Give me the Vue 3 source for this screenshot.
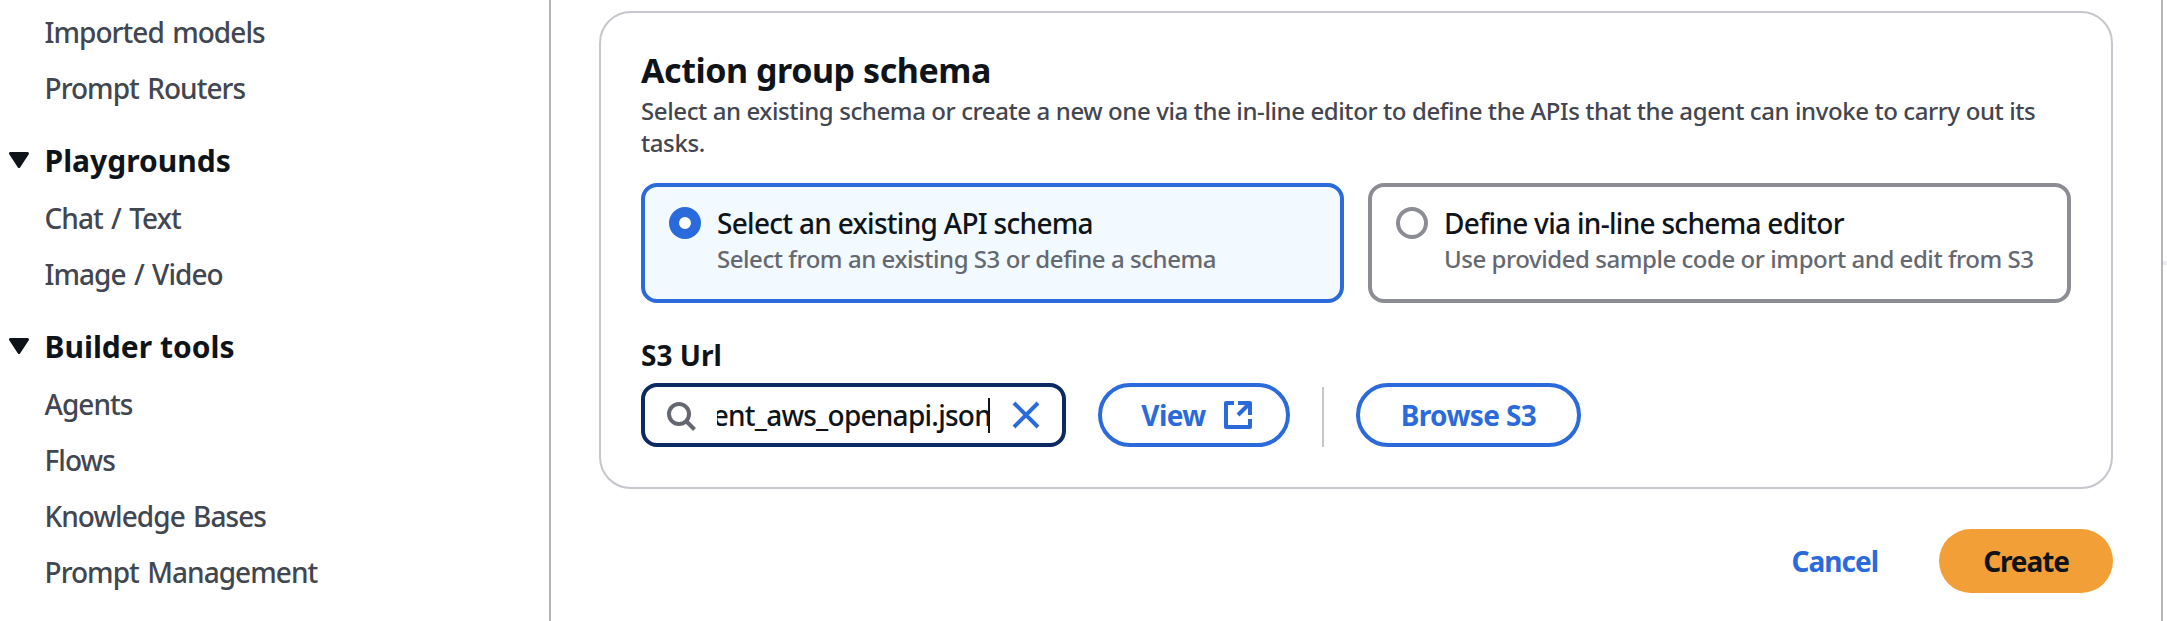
<script setup>
import { ref } from 'vue'

const topLinks = ['Imported models', 'Prompt Routers']
const groups = [
  { title: 'Playgrounds', links: ['Chat / Text', 'Image / Video'] },
  { title: 'Builder tools', links: ['Agents', 'Flows', 'Knowledge Bases', 'Prompt Management'] },
]
const options = [
  { id: 'existing', title: 'Select an existing API schema', note: 'Select from an existing S3 or define a schema' },
  { id: 'inline', title: 'Define via in-line schema editor', note: 'Use provided sample code or import and edit from S3' },
]
const selected = ref('existing')
const url = ref('ent_aws_openapi.json')
</script>

<template>
  <div class="page">
    <nav class="sidebar">
      <a v-for="l in topLinks" :key="l" class="link">{{ l }}</a>
      <section v-for="g in groups" :key="g.title" class="group">
        <h3 class="group-title">
          <svg class="caret" width="20" height="16" viewBox="0 0 20 16"><path d="M1.5 1.5H18.5L10 14.5Z" /></svg>
          <span>{{ g.title }}</span>
        </h3>
        <a v-for="l in g.links" :key="l" class="link">{{ l }}</a>
      </section>
    </nav>

    <main class="main">
      <section class="card">
        <h2 class="title">Action group schema</h2>
        <p class="desc">Select an existing schema or create a new one via the in-line editor to define the APIs that the agent can invoke to carry out its<br>tasks.</p>

        <div class="options">
          <div
            v-for="o in options"
            :key="o.id"
            :class="['option', { active: selected === o.id }]"
            @click="selected = o.id"
          >
            <span class="radio"></span>
            <div class="option-text">
              <div class="option-title">{{ o.title }}</div>
              <div class="option-note">{{ o.note }}</div>
            </div>
          </div>
        </div>

        <div class="label">S3 Url</div>
        <div class="row">
          <div class="input">
            <svg class="search" width="32" height="32" viewBox="0 0 32 32"><circle cx="14" cy="14" r="10" /><path d="M21 21L29.5 29.5" /></svg>
            <div class="value"><span>{{ url }}</span></div>
            <span class="cursor"></span>
            <svg class="clear" width="28" height="28" viewBox="0 0 28 28"><path d="M2 2L26 26M26 2L2 26" /></svg>
          </div>
          <button class="btn view">
            <span>View</span>
            <svg width="28" height="28" viewBox="0 0 28 28"><path d="M10 2H2V26H26V18" stroke-linejoin="round" /><path d="M14 2H26V14" stroke-linejoin="round" /><path d="M26 2L14 14" /></svg>
          </button>
          <span class="divider"></span>
          <button class="btn browse">Browse S3</button>
        </div>
      </section>

      <footer class="footer">
        <a class="cancel">Cancel</a>
        <button class="create">Create</button>
      </footer>
    </main>

    <aside class="edge"><span class="edge-line"></span></aside>
  </div>
</template>

<style>
body { margin: 0; background: #fff; }
</style>

<style scoped>
.page {
  display: flex;
  width: 2167px;
  height: 621px;
  overflow: hidden;
  background: #fff;
  color: #0f141a;
  font-family: "Noto Sans", "Open Sans", sans-serif;
  font-size: 28px;
  font-weight: 500;
}
.page * { box-sizing: border-box; }
.sidebar {
  width: 551px;
  flex: none;
  padding-top: 12px;
  border-right: 2px solid #b4b4bb;
}
.link {
  display: block;
  height: 40px;
  margin: 0 0 16px 44px;
  padding-left: 0.5px;
  line-height: 40px;
  letter-spacing: -0.95px;
  word-spacing: 2px;
  color: #424650;
  white-space: nowrap;
}
.group { padding-top: 16px; }
.group-title {
  display: flex;
  align-items: center;
  height: 40px;
  margin: 0 0 18px;
  padding-left: 9px;
  font-size: 30px;
  line-height: 41px;
  font-weight: 700;
}
.group-title span { margin-left: 15.5px; }
.caret { fill: #0f141a; stroke: #0f141a; stroke-width: 3; stroke-linejoin: round; }
.main { flex: none; width: 1610px; padding: 11px 48px 0; }
.card {
  height: 478px;
  padding: 35px 40px 0;
  border: 2px solid #c6c6cd;
  border-radius: 32px;
}
.title {
  margin: 0;
  font-size: 34px;
  line-height: 44px;
  font-weight: 700;
  letter-spacing: -0.45px;
}
.desc {
  margin: 3px 0 24px;
  font-size: 24px;
  line-height: 32px;
  letter-spacing: -0.4px;
  color: #424650;
  white-space: nowrap;
}
.options { display: grid; grid-template-columns: 703px 703px; gap: 24px; }
.option {
  display: flex;
  height: 120px;
  padding: 20px 24px;
  border: 4px solid #8c8c94;
  border-radius: 16px;
}
.option.active { border-color: #2b6adb; background: #f2faff; }
.radio {
  flex: none;
  width: 32px;
  height: 32px;
  margin-right: 16px;
  border: 4px solid #8c8c94;
  border-radius: 50%;
  background: #fff;
}
.active .radio { border: 10px solid #2b6adb; }
.option-text { white-space: nowrap; }
.option-title { line-height: 32px; letter-spacing: -0.7px; }
.option-note {
  margin-top: 4px;
  font-size: 24px;
  line-height: 32px;
  letter-spacing: -0.45px;
  color: #656871;
}
.label {
  margin: 32px 0 8px;
  height: 40px;
  line-height: 40px;
  font-weight: 700;
}
.row { display: flex; height: 64px; }
.input {
  display: flex;
  align-items: center;
  width: 425px;
  border: 4px solid #0b2a63;
  border-radius: 16px;
  padding-left: 20px;
}
.search { flex: none; fill: none; stroke: #656871; stroke-width: 4; margin-top: 1px; }
.value {
  display: flex;
  justify-content: flex-end;
  width: 271px;
  margin-left: 20px;
  overflow: hidden;
  line-height: 42px;
  letter-spacing: -0.75px;
  white-space: nowrap;
}
.value span { margin-right: -3px; }
.cursor { width: 2px; height: 35px; background: #0f141a; }
.clear { margin-left: 22px; fill: none; stroke: #2b6adb; stroke-width: 4; }
.btn {
  display: flex;
  align-items: center;
  justify-content: center;
  height: 64px;
  padding: 0;
  border: 4px solid #2b6adb;
  border-radius: 32px;
  background: #fff;
  color: #2b6adb;
  font: 700 28px/40px "Noto Sans", "Open Sans", sans-serif;
  letter-spacing: -0.6px;
}
.btn svg { fill: none; stroke: #2b6adb; stroke-width: 4; }
.view { width: 192px; margin-left: 32px; padding-left: 5px; gap: 18px; }
.divider { width: 2px; height: 60px; margin: 4px 32px 0; background: #c6c6cd; }
.browse { width: 225px; }
.footer {
  display: flex;
  align-items: center;
  justify-content: flex-end;
  margin-top: 40px;
  height: 64px;
  font-weight: 700;
  letter-spacing: -1px;
}
.cancel { margin-right: 61px; color: #2b6adb; }
.create {
  width: 174px;
  height: 64px;
  padding: 0;
  border: 0;
  border-radius: 32px;
  background: #f29f38;
  color: #0f141a;
  font: 700 28px/40px "Noto Sans", "Open Sans", sans-serif;
  letter-spacing: -1.1px;
}
.edge { flex: 1; border-left: 2px solid #b4b4bb; }
.edge-line { display: block; height: 4px; margin-top: 261px; background: #ebebf0; }
</style>
